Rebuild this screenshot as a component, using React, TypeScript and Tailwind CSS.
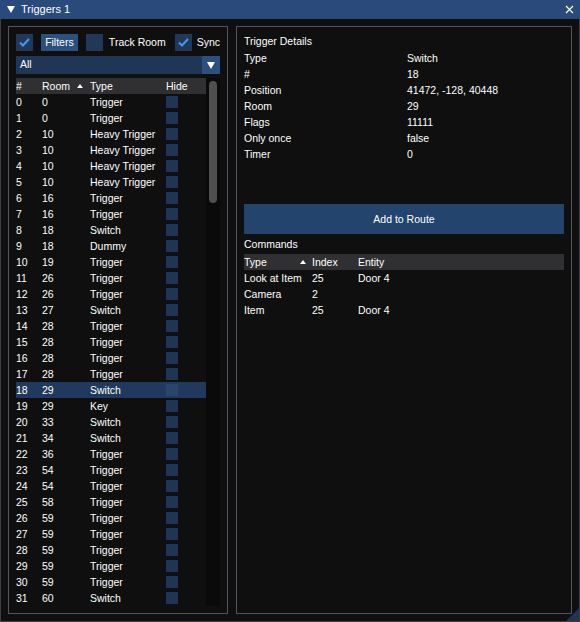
import React from "react";

const triggers: [number, number, string][] = [
  [0, 0, "Trigger"],
  [1, 0, "Trigger"],
  [2, 10, "Heavy Trigger"],
  [3, 10, "Heavy Trigger"],
  [4, 10, "Heavy Trigger"],
  [5, 10, "Heavy Trigger"],
  [6, 16, "Trigger"],
  [7, 16, "Trigger"],
  [8, 18, "Switch"],
  [9, 18, "Dummy"],
  [10, 19, "Trigger"],
  [11, 26, "Trigger"],
  [12, 26, "Trigger"],
  [13, 27, "Switch"],
  [14, 28, "Trigger"],
  [15, 28, "Trigger"],
  [16, 28, "Trigger"],
  [17, 28, "Trigger"],
  [18, 29, "Switch"],
  [19, 29, "Key"],
  [20, 33, "Switch"],
  [21, 34, "Switch"],
  [22, 36, "Trigger"],
  [23, 54, "Trigger"],
  [24, 54, "Trigger"],
  [25, 58, "Trigger"],
  [26, 59, "Trigger"],
  [27, 59, "Trigger"],
  [28, 59, "Trigger"],
  [29, 59, "Trigger"],
  [30, 59, "Trigger"],
  [31, 60, "Switch"],
];

const details: [string, string][] = [
  ["Type", "Switch"],
  ["#", "18"],
  ["Position", "41472, -128, 40448"],
  ["Room", "29"],
  ["Flags", "11111"],
  ["Only once", "false"],
  ["Timer", "0"],
];

const commands: [string, string, string][] = [
  ["Look at Item", "25", "Door 4"],
  ["Camera", "2", ""],
  ["Item", "25", "Door 4"],
];

function Check({ checked }: { checked?: boolean }) {
  return (
    <div className="flex h-[17px] w-[17px] shrink-0 items-center justify-center bg-[#213858]">
      {checked ? (
        <svg width="13" height="13" viewBox="0 0 13 13">
          <path d="M2 6.5 L5 9.5 L11 3" fill="none" stroke="#4296fa" strokeWidth="2" />
        </svg>
      ) : null}
    </div>
  );
}

function SortArrow() {
  return (
    <svg width="6" height="4" viewBox="0 0 6 4" className="mb-[3px]">
      <path d="M0 4 L3 0 L6 4 Z" fill="#ffffff" />
    </svg>
  );
}

// rows are 16px; text sits 1px below the middle like ImGui does
const row = "flex h-[16px] items-center pt-[2px]";

export default function App() {
  return (
    <div
      className="relative flex h-[622px] w-[580px] flex-col bg-[#0f0f0f] text-[10.5px] text-white shadow-[inset_0_0_0_1px_#3e3e47]"
      style={{ fontFamily: '"Liberation Sans", Arial, sans-serif' }}
    >
      <div className="flex h-[19px] shrink-0 items-center bg-[#294a7a] pl-[7px] pr-[6px]">
        <svg width="8" height="7" viewBox="0 0 8 7">
          <path d="M0 0 L8 0 L4 7 Z" fill="#ffffff" />
        </svg>
        <span className="ml-[6px] text-[11px]">Triggers 1</span>
        <svg width="9" height="9" viewBox="0 0 9 9" className="ml-auto">
          <path d="M1 1 L8 8 M8 1 L1 8" stroke="#ffffff" strokeWidth="1.2" />
        </svg>
      </div>

      <div className="flex min-h-0 flex-1 gap-2 px-2 pb-2 pt-[7px]">
        {/* left pane */}
        <div className="flex w-[220px] shrink-0 flex-col overflow-hidden border border-[#55555e] p-[7px]">
          <div className="flex h-[17px] items-center">
            <Check checked />
            <div className="ml-[8px] flex h-[17px] w-[38px] items-center justify-center bg-[#2b4f7f]">
              Filters
            </div>
            <div className="ml-[8px]">
              <Check />
            </div>
            <span className="ml-[6px] whitespace-nowrap">Track Room</span>
            <div className="ml-[9px]">
              <Check checked />
            </div>
            <span className="ml-[5px] whitespace-nowrap">Sync</span>
          </div>

          <div className="mt-[5px] flex h-[18px] items-center bg-[#1f3656]">
            <span className="pl-[4px]">All</span>
            <div className="ml-auto flex h-[18px] w-[18px] items-center justify-center bg-[#2b4f7f]">
              <svg width="8" height="7" viewBox="0 0 8 7">
                <path d="M0 0 L8 0 L4 7 Z" fill="#ffffff" />
              </svg>
            </div>
          </div>

          <div className="mt-[4px] flex min-h-0 flex-1">
            <div className="min-w-0 flex-1 overflow-hidden">
              <div className={row + " bg-[#303033]"}>
                <span className="w-[26px]">#</span>
                <span className="flex w-[48px] items-center">
                  Room
                  <span className="ml-auto mr-[7px] flex">
                    <SortArrow />
                  </span>
                </span>
                <span className="w-[76px]">Type</span>
                <span>Hide</span>
              </div>
              {triggers.map(([id, room, type]) => (
                <div key={id} className={row + (id === 18 ? " bg-[#1f3a5c]" : "")}>
                  <span className="w-[26px]">{id}</span>
                  <span className="w-[48px]">{room}</span>
                  <span className="w-[76px] whitespace-nowrap">{type}</span>
                  <span
                    className={
                      "h-[12px] w-[12px] self-start " +
                      (id === 18 ? "bg-[#274669]" : "bg-[#1f3555]")
                    }
                  />
                </div>
              ))}
            </div>
            <div className="w-[14px] shrink-0 bg-[#0a0a0a] px-[3px] pt-[3px]">
              <div className="h-[122px] w-[8px] rounded-full bg-[#4f4f4f]" />
            </div>
          </div>
        </div>

        {/* right pane */}
        <div className="flex flex-1 flex-col border border-[#55555e] p-[7px]">
          <div className="h-[16px] leading-[14px]">Trigger Details</div>
          {details.map(([k, v]) => (
            <div key={k} className={row}>
              <span className="w-[163px]">{k}</span>
              <span>{v}</span>
            </div>
          ))}

          <div className="mt-[42px] flex h-[30px] items-center justify-center bg-[#23446c] pt-[1px]">
            Add to Route
          </div>

          <div className="mt-[3px] flex h-[16px] items-center">Commands</div>
          <div className={row + " mt-[1px] bg-[#303033]"}>
            <span className="flex w-[68px] items-center">
              Type
              <span className="ml-auto mr-[6px] flex">
                <SortArrow />
              </span>
            </span>
            <span className="w-[46px]">Index</span>
            <span>Entity</span>
          </div>
          {commands.map(([t, i, e]) => (
            <div key={t} className={row}>
              <span className="w-[68px] whitespace-nowrap">{t}</span>
              <span className="w-[46px]">{i}</span>
              <span>{e}</span>
            </div>
          ))}
        </div>
      </div>

      <svg
        width="13"
        height="13"
        viewBox="0 0 13 13"
        className="absolute bottom-[1px] right-[1px]"
      >
        <path d="M13 0 L13 13 L0 13 Z" fill="#1f3553" />
      </svg>
    </div>
  );
}
